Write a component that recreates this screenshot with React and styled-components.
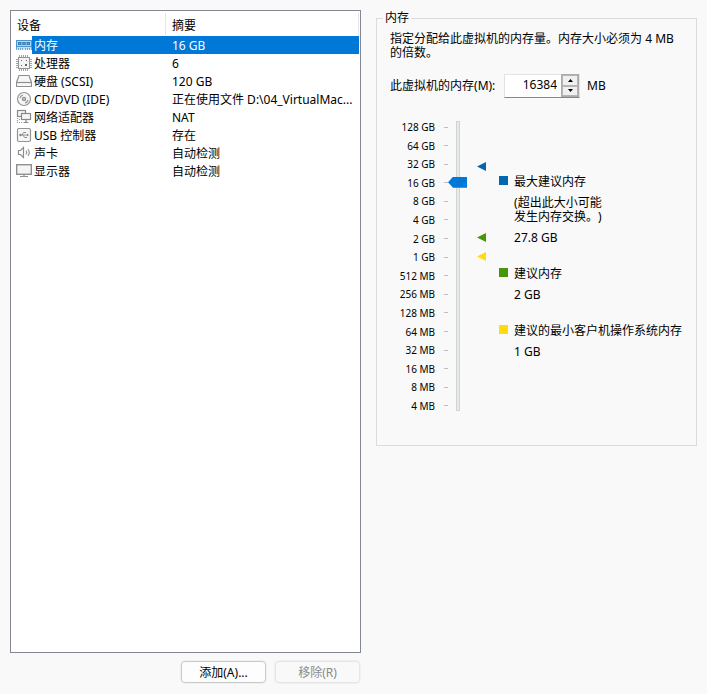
import React, { useState } from 'react';
import styled, { createGlobalStyle } from 'styled-components';

const GlobalStyle = createGlobalStyle`
    * {
        box-sizing: border-box;
    }

    body {
        margin: 0;
        background: #f9f9f9;
        color: #000;
        font-family: "Noto Sans", "Noto Sans CJK SC", sans-serif;
        font-size: 12px;
        line-height: 14px;
        text-spacing-trim: space-all;
    }

    button, input {
        font: inherit;
        color: inherit;
    }
`;

const Page = styled.main`
    display: grid;
    grid-template-columns: minmax(0, 35fr) minmax(0, 32fr);
    gap: 15px;
    min-height: 100vh;
    padding: 10px;
`;

const Hardware = styled.section`
    display: flex;
    flex-direction: column;
`;

const DeviceList = styled.div`
    flex: 1;
    padding: 0 1px 0 0;
    background: #fff;
    border: 1px solid #828790;
`;

const Table = styled.table`
    width: 100%;
    table-layout: fixed;
    border-collapse: collapse;
    text-align: left;
`;

const HeadCell = styled.th`
    width: ${(props) => props.$width || 'auto'};
    height: 25px;
    padding: 4px 6px 0;
    font-weight: normal;
    background: linear-gradient(#e5e5e5, #e5e5e5) right 2px / 1px 22px no-repeat;
`;

const DeviceRow = styled.tr`
    height: 18px;
    color: ${(props) => (props.$selected ? '#fff' : '#000')};
    cursor: default;
`;

const NameCell = styled.td`
    padding: 0 0 0 5px;
`;

const DeviceName = styled.div`
    display: flex;
    align-items: center;

    svg {
        flex: none;
    }
`;

const NameText = styled.span`
    flex: 1;
    padding: 2px 0 0 2px;
    line-height: 16px;
    background: ${(props) => (props.$selected ? '#0078d7' : 'transparent')};
`;

const SummaryCell = styled.td`
    padding: 2px 5px 0 6px;
    line-height: 16px;
    overflow: hidden;
    white-space: nowrap;
    text-overflow: ellipsis;
    background: ${(props) => (props.$selected ? '#0078d7' : 'transparent')};
`;

const Actions = styled.div`
    display: flex;
    justify-content: flex-end;
    gap: 9px;
    padding: 8px 1px 1px;
`;

const ActionButton = styled.button`
    width: 85px;
    height: 22px;
    padding: 2px 0 0;
    background: #fdfdfd;
    border: 1px solid #cacaca;
    border-radius: 4px;
    box-shadow: 0 0 0 1px #f0f0f0;

    &:disabled {
        color: #8a8a8a;
        background: #f9f9f9;
        border-color: #e6e6e6;
    }
`;

const MemoryGroup = styled.fieldset`
    align-self: start;
    min-width: 0;
    margin: 1px 0 0;
    padding: 7px 13px 33px;
    border: 1px solid #dcdcdc;
`;

const GroupTitle = styled.legend`
    margin-left: -7px;
    padding: 0 2px;
`;

const Description = styled.p`
    margin: 0;
    padding-right: 8px;
`;

const SizeField = styled.div`
    display: flex;
    align-items: center;
    gap: 7px;
    margin: 14px 0 23px;
`;

const SizeLabel = styled.label`
    min-width: 107px;
`;

const Spinner = styled.div`
    display: flex;
    width: 76px;
    height: 24px;
    border: 1px solid #e3e3e3;
    border-bottom-color: #868686;
    background: #fff;
`;

const SizeInput = styled.input`
    flex: 1;
    min-width: 0;
    padding: 0 4px 2px 0;
    border: 0;
    outline: 0;
    background: transparent;
    text-align: right;
`;

const SpinButtons = styled.div`
    display: flex;
    flex-direction: column;
    width: 18px;
    margin-top: -1px;
    border: 1px solid #ababab;
    background: #f0f0f0;
`;

const SpinButton = styled.button`
    display: flex;
    flex: 1;
    align-items: center;
    justify-content: center;
    padding: 0;
    border: 1px solid #b5b5b5;
    background: #f0f0f0;
`;

const MemoryScale = styled.div`
    display: flex;
`;

const ScaleLabels = styled.ul`
    display: flex;
    flex-direction: column;
    justify-content: space-between;
    width: 58px;
    height: 291px;
    margin: 0;
    padding: 0;
    list-style: none;
`;

const ScaleLabel = styled.li`
    display: flex;
    align-items: center;
    justify-content: flex-end;
    gap: 9px;
    font-size: 10px;
    line-height: 12px;

    &::after {
        content: "";
        width: 4px;
        height: 1px;
        background: #bfbfbf;
    }
`;

const Slider = styled.input`
    appearance: none;
    writing-mode: vertical-lr;
    direction: rtl;
    width: 19px;
    height: 290px;
    margin: 0 10px 0 0;
    background:
        linear-gradient(#e7eaea, #e7eaea) 9px 1px / 2px 288px no-repeat,
        linear-gradient(#cfd3d3, #cfd3d3) 8px 0 / 4px 290px no-repeat;

    &::-webkit-slider-thumb {
        appearance: none;
        width: 19px;
        height: 11px;
        background: #0078d7;
        clip-path: polygon(0 50%, 5px 0, 100% 0, 100% 100%, 5px 100%);
    }
`;

const Hints = styled.dl`
    flex: 1;
    min-width: 0;
    margin: 54px 0 0 13px;
`;

const HintTitle = styled.dt`
    display: flex;
    gap: 6px;
    margin-top: ${(props) => (props.$first ? '0' : '22px')};
    white-space: nowrap;

    &::before {
        content: "";
        width: 9px;
        height: 9px;
        margin-top: 1px;
        background: ${(props) => props.$color};
    }
`;

const HintText = styled.dd`
    margin: 7px 0 0 15px;
`;

const MemoryIcon = () => (
    <svg width="16" height="16" viewBox="0 0 16 16">
        <path d="M0 3h16v7H0z" fill="#4e94cb" />
        <path d="M1 4h14v5H1z" fill="#b9d9f0" />
        <path d="M2 5h3.500v3H2zM6.250 5h3.500v3h-3.500zM10.500 5H14v3h-3.500z" fill="#347ab4" />
        <path d="M3 6h1.500v1H3zM7.250 6h1.500v1h-1.500zM11.500 6H13v1h-1.500z" fill="#7fb4dc" />
        <path d="M0 10h16v2.500H0z" fill="#c4dff2" />
        <path d="M.5 10v3M2.500 11v2M4.500 11v2M6.500 11v2M9.500 11v2M11.500 11v2M13.500 11v2M15.500 10v3" stroke="#6ca4cf" />
    </svg>
);

const ProcessorIcon = () => (
    <svg width="16" height="16" viewBox="0 0 16 16">
        <path d="M3.500 0v16M5.500 0v16M7.500 0v16M9.500 0v16M11.500 0v16M0 4.500h16M0 6.500h16M0 8.500h16M0 10.500h16M0 12.500h16" stroke="#a2a2a2" />
        <rect x="2.500" y="2.500" width="11" height="11" fill="#f3f3f3" stroke="#949494" />
        <path d="M5 5h1v1H5zM10 5h1v1h-1zM5 10h1v1H5zM9 9h2v2H9z" fill="#666" />
    </svg>
);

const DiskIcon = () => (
    <svg width="16" height="16" viewBox="0 0 16 16" fill="none" stroke="#909090" strokeWidth="1.200">
        <path d="M3 2.500h10l2.500 7v4H.5v-4z" fill="#f7f7f7" />
        <path d="M.5 9.500h15" />
    </svg>
);

const DiscIcon = () => (
    <svg width="16" height="16" viewBox="0 0 16 16" fill="none" stroke="#949494" strokeWidth="1.200">
        <circle cx="8" cy="8" r="6.500" fill="#f5f5f5" />
        <circle cx="8" cy="8" r="1.500" strokeWidth="1.500" />
        <path d="M4 7A4 4 0 0 1 7 4M12 9A4 4 0 0 1 9 12" />
    </svg>
);

const NetworkIcon = () => (
    <svg width="16" height="16" viewBox="0 0 16 16" fill="none" stroke="#888" strokeWidth="1.200">
        <rect x="1.500" y="1.500" width="8" height="6" fill="#f5f5f5" />
        <rect x="5.500" y="4.500" width="9" height="6" fill="#f5f5f5" />
        <path d="M10 10.500v2.500M7.500 13.500h5" />
        <path d="M1.500 9v5M1 13.500h6M3 10.500h2" strokeDasharray="1 1" stroke="#999" />
    </svg>
);

const UsbIcon = () => (
    <svg width="16" height="16" viewBox="0 0 16 16" fill="none" stroke="#949494">
        <rect x="1.500" y="1.500" width="13" height="13" rx="1.500" fill="#f7f7f7" strokeWidth="1.200" />
        <path d="M4 8h8M6 8l1.500-2.500H9M7 8l1.500 2.500H10" />
        <circle cx="4.500" cy="8" r="1.200" fill="#868686" stroke="none" />
        <path d="M11 6.500v3L13 8zM8.500 5H10v1H8.500zM9.500 10H11v1H9.500z" fill="#868686" stroke="none" />
    </svg>
);

const SoundIcon = () => (
    <svg width="16" height="16" viewBox="0 0 16 16" fill="none" stroke="#8c8c8c" strokeWidth="1.200">
        <path d="M2.500 5.500v4h2l3 3v-10l-3 3z" />
        <path d="M10 5.500q1.500 2 0 4M12 4q2.500 3.500 0 7" stroke="#999" />
    </svg>
);

const DisplayIcon = () => (
    <svg width="16" height="16" viewBox="0 0 16 16" fill="none" stroke="#909090" strokeWidth="1.400">
        <rect x=".7" y="1.700" width="14.600" height="9.600" fill="#f5f5f5" />
        <path d="M8 12v1M4 13.500h8" strokeWidth="1.200" />
    </svg>
);

const devices = [
    { name: '内存', summary: '16 GB', icon: MemoryIcon },
    { name: '处理器', summary: '6', icon: ProcessorIcon },
    { name: '硬盘 (SCSI)', summary: '120 GB', icon: DiskIcon },
    { name: 'CD/DVD (IDE)', summary: '正在使用文件 D:\\04_VirtualMac...', icon: DiscIcon },
    { name: '网络适配器', summary: 'NAT', icon: NetworkIcon },
    { name: 'USB 控制器', summary: '存在', icon: UsbIcon },
    { name: '声卡', summary: '自动检测', icon: SoundIcon },
    { name: '显示器', summary: '自动检测', icon: DisplayIcon },
];

const sizes = [
    '128 GB', '64 GB', '32 GB', '16 GB', '8 GB', '4 GB', '2 GB', '1 GB',
    '512 MB', '256 MB', '128 MB', '64 MB', '32 MB', '16 MB', '8 MB', '4 MB',
];

// Slider steps are powers of two, starting at 4 MB
const toStep = (mb) => Math.round(Math.log2(Math.max(4, mb) / 4));

const App = () => {
    const [selected, setSelected] = useState(0);
    const [memory, setMemory] = useState(16384);

    return (
        <Page lang="zh-CN">
            <GlobalStyle />
            <Hardware>
                <DeviceList>
                    <Table>
                        <thead>
                            <tr>
                                <HeadCell scope="col" $width="155px">设备</HeadCell>
                                <HeadCell scope="col">摘要</HeadCell>
                            </tr>
                        </thead>
                        <tbody>
                            {devices.map(({ name, summary, icon: Icon }, index) => (
                                <DeviceRow
                                    key={name}
                                    $selected={index === selected}
                                    onClick={() => setSelected(index)}
                                >
                                    <NameCell>
                                        <DeviceName>
                                            <Icon />
                                            <NameText $selected={index === selected}>{name}</NameText>
                                        </DeviceName>
                                    </NameCell>
                                    <SummaryCell $selected={index === selected}>{summary}</SummaryCell>
                                </DeviceRow>
                            ))}
                        </tbody>
                    </Table>
                </DeviceList>
                <Actions>
                    <ActionButton type="button">添加(A)...</ActionButton>
                    <ActionButton type="button" disabled>移除(R)</ActionButton>
                </Actions>
            </Hardware>

            <MemoryGroup>
                <GroupTitle>内存</GroupTitle>
                <Description>指定分配给此虚拟机的内存量。内存大小必须为 4 MB 的倍数。</Description>
                <SizeField>
                    <SizeLabel htmlFor="memory">此虚拟机的内存(M):</SizeLabel>
                    <Spinner>
                        <SizeInput
                            id="memory"
                            inputMode="numeric"
                            value={memory}
                            onChange={(e) => setMemory(Number(e.target.value) || 0)}
                        />
                        <SpinButtons>
                            <SpinButton type="button" aria-label="+" onClick={() => setMemory(memory + 4)}>
                                <svg width="5" height="3" viewBox="0 0 5 3"><path d="M0 3L2.500 0L5 3z" /></svg>
                            </SpinButton>
                            <SpinButton type="button" aria-label="-" onClick={() => setMemory(memory - 4)}>
                                <svg width="5" height="3" viewBox="0 0 5 3"><path d="M0 0L2.500 3L5 0z" /></svg>
                            </SpinButton>
                        </SpinButtons>
                    </Spinner>
                    <span>MB</span>
                </SizeField>
                <MemoryScale>
                    <ScaleLabels>
                        {sizes.map((size) => (
                            <ScaleLabel key={size}>{size}</ScaleLabel>
                        ))}
                    </ScaleLabels>
                    <Slider
                        type="range"
                        min="0"
                        max="15"
                        aria-labelledby="memory"
                        value={toStep(memory)}
                        onChange={(e) => setMemory(4 * 2 ** Number(e.target.value))}
                    />
                    <svg width="9" height="291" viewBox="0 0 9 291">
                        <path d="M0 45.500L9 41v9z" fill="#0067b0" />
                        <path d="M0 116.500L9 112v9z" fill="#48960c" />
                        <path d="M0 135.500L9 131v9z" fill="#ffdc0b" />
                    </svg>
                    <Hints>
                        <HintTitle $first $color="#0067b0">最大建议内存</HintTitle>
                        <HintText>(超出此大小可能<br />发生内存交换。)</HintText>
                        <HintText>27.8 GB</HintText>
                        <HintTitle $color="#48960c">建议内存</HintTitle>
                        <HintText>2 GB</HintText>
                        <HintTitle $color="#ffdc0b">建议的最小客户机操作系统内存</HintTitle>
                        <HintText>1 GB</HintText>
                    </Hints>
                </MemoryScale>
            </MemoryGroup>
        </Page>
    );
};

export default App;
